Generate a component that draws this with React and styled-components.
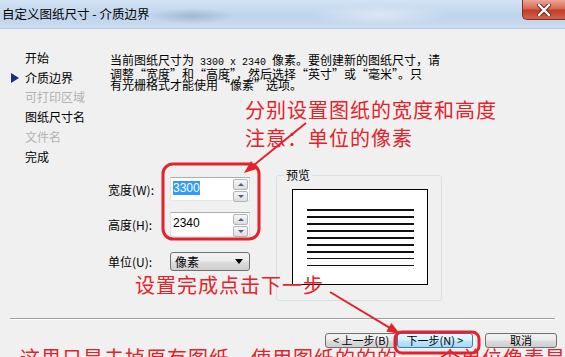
import React from 'react';
import styled, { createGlobalStyle } from 'styled-components';

const GlobalStyle = createGlobalStyle`
  html, body {
    margin:0;
    padding:0;
    background:#f0f0f0;
  }
  body {
    font-family:"Noto Sans CJK SC", "Liberation Sans", sans-serif;
  }
`;

const RED = '#e4222b';

const Window = styled.div`
  position:relative;
  width:565px;
  height:357px;
  overflow:hidden;
  background:#f0f0f0;
  display:flex;
  flex-direction:column;
  font-family:"Noto Sans CJK SC", "Liberation Sans", sans-serif;
  color:#000;
`;

const TitleBar = styled.div`
  height:28px;
  flex:none;
  display:flex;
  align-items:flex-start;
  border-bottom:1px solid #b7c8da;
  background:
    radial-gradient(ellipse 42px 8px at 192px 16px, rgba(110,130,160,.35), transparent),
    radial-gradient(ellipse 70px 10px at 380px 15px, rgba(255,255,255,.45), transparent),
    linear-gradient(#d3e3f4, #bfd4eb 55%, #c9dbef);
`;

const Title = styled.div`
  padding-left:2px;
  font-size:12.5px;
  line-height:28px;
  white-space:nowrap;
`;

const CloseButton = styled.div`
  margin-left:auto;
  width:42px;
  height:19px;
  display:flex;
  align-items:center;
  justify-content:center;
  border:1px solid #7a3426;
  border-top:none;
  border-right:none;
  border-bottom-left-radius:5px;
  background:linear-gradient(#eaa596, #d66450 48%, #c23c27 52%, #d5614b);
`;

const Main = styled.div`
  height:289px;
  flex:none;
  display:grid;
  grid-template-columns:110px 1fr;
`;

const Nav = styled.ul`
  list-style:none;
  margin:0;
  padding:19px 0 0 25px;
`;

const NavItem = styled.li`
  position:relative;
  font-size:12px;
  line-height:19.7px;
  color:${(p) => (p.$disabled ? '#b3b3b3' : '#000')};
  &::before {
    content:${(p) => (p.$active ? "''" : 'none')};
    position:absolute;
    left:-14px;
    top:5px;
    border-left:8px solid #1b2a8c;
    border-top:5px solid transparent;
    border-bottom:5px solid transparent;
  }
`;

const Content = styled.div`
  padding-top:25px;
`;

const Description = styled.p`
  margin:0;
  font-size:12px;
  line-height:11px;
  white-space:nowrap;
`;

const Mono = styled.span`
  font-family:"Liberation Mono", monospace;
  font-size:10px;
`;

const FormArea = styled.div`
  margin-top:85px;
  display:flex;
  align-items:flex-start;
`;

const Fields = styled.div`
  margin-left:-2px;
  padding-top:2px;
  display:flex;
  flex-direction:column;
`;

const Row = styled.div`
  display:flex;
  align-items:center;
  margin-top:${(p) => p.$gap || 0}px;
`;

const Label = styled.span`
  width:62px;
  font-size:12px;
  white-space:nowrap;
`;

const SpinBox = styled.div`
  width:80px;
  height:${(p) => p.$h}px;
  box-sizing:border-box;
  display:flex;
  align-items:flex-start;
  background:#fff;
  border:1px solid;
  border-color:#abadb3 #dbdfe6 #e3e9ef #e2e3ea;
`;

const Value = styled.span`
  flex:1;
  padding:3px 0 0 2px;
  font-family:"Liberation Sans", sans-serif;
  font-size:12px;
  line-height:14px;
`;

const Selected = styled.span`
  background:#3399ff;
  color:#fff;
`;

const Spinner = styled.div`
  margin:1px 1px 0 0;
  width:15px;
  display:flex;
  flex-direction:column;
  gap:1px;
`;

const SpinButton = styled.div`
  height:9px;
  display:flex;
  align-items:center;
  justify-content:center;
  border:1px solid #b4b4b4;
  border-radius:2px;
  background:linear-gradient(#f6f6f6, #dedede);
  &::after {
    content:'';
    border-left:3px solid transparent;
    border-right:3px solid transparent;
    ${(p) => (p.$down ? 'border-top:3px solid #4d6185;' : 'border-bottom:3px solid #4d6185;')}
  }
`;

const Select = styled.div`
  width:80px;
  height:19px;
  box-sizing:border-box;
  display:flex;
  align-items:center;
  justify-content:space-between;
  padding:0 6px 0 4px;
  border:1px solid #707070;
  border-radius:3px;
  background:linear-gradient(#f3f3f3, #ebebeb 48%, #dddddd 52%, #cfcfcf);
  font-size:12px;
  &::after {
    content:'';
    border-left:4px solid transparent;
    border-right:4px solid transparent;
    border-top:5px solid #000;
  }
`;

const PreviewGroup = styled.div`
  position:relative;
  margin-left:26px;
  width:166px;
  height:126px;
  box-sizing:border-box;
  padding:13px 0 0 15px;
  border:1px solid #d5dfe5;
  border-radius:3px;
`;

const Legend = styled.span`
  position:absolute;
  top:-9px;
  left:7px;
  padding:0 2px;
  background:#f0f0f0;
  font-size:12px;
  line-height:16px;
`;

const Page = styled.div`
  width:136px;
  height:96px;
  box-sizing:border-box;
  border:1px solid #000;
  background:#fff;
  display:flex;
  flex-direction:column;
  gap:5.4px;
  padding:19px 0 0 14px;
`;

const PageLine = styled.div`
  width:107px;
  height:1.6px;
  background:#111;
`;

const Footer = styled.div`
  display:flex;
  flex-direction:column;
`;

const Separator = styled.div`
  margin:0 10px;
  border-top:1px solid #a0a0a0;
  border-bottom:1px solid #fff;
`;

const ButtonRow = styled.div`
  margin-top:13px;
  padding-right:8px;
  display:flex;
  justify-content:flex-end;
`;

const Button = styled.div`
  width:${(p) => p.$w}px;
  height:15px;
  box-sizing:border-box;
  margin-left:${(p) => p.$gap || 0}px;
  display:flex;
  align-items:center;
  justify-content:center;
  font-size:11px;
  line-height:13px;
  white-space:nowrap;
  border:1px solid ${(p) => (p.$primary ? '#3c7fb1' : '#707070')};
  border-radius:3px;
  background:${(p) =>
    p.$primary
      ? 'linear-gradient(#eaf6fd, #d9f0fc 48%, #bee6fd 52%, #a7d9f5)'
      : 'linear-gradient(#f2f2f2, #ebebeb 48%, #dddddd 52%, #cfcfcf)'};
`;

const Overlay = styled.svg`
  position:absolute;
  left:0;
  top:0;
  pointer-events:none;
`;

const Note = styled.div`
  position:absolute;
  left:${(p) => p.$x}px;
  top:${(p) => p.$y}px;
  font-size:20px;
  line-height:20px;
  letter-spacing:1px;
  color:${RED};
  white-space:nowrap;
`;

function arrowHead(x1, y1, x2, y2, len = 13, w = 5) {
  const dx = x2 - x1;
  const dy = y2 - y1;
  const l = Math.hypot(dx, dy);
  const ux = dx / l;
  const uy = dy / l;
  const bx = x2 - ux * len;
  const by = y2 - uy * len;
  return `${x2},${y2} ${bx - uy * w},${by + ux * w} ${bx + uy * w},${by - ux * w}`;
}

function Arrow({ from, to }) {
  const [x1, y1] = from;
  const [x2, y2] = to;
  const l = Math.hypot(x2 - x1, y2 - y1);
  const ex = x2 - ((x2 - x1) / l) * 8;
  const ey = y2 - ((y2 - y1) / l) * 8;
  return (
    <g>
      <line x1={x1} y1={y1} x2={ex} y2={ey} stroke={RED} strokeWidth="2" />
      <polygon points={arrowHead(x1, y1, x2, y2)} fill={RED} />
    </g>
  );
}

const navItems = [
  { label: '开始' },
  { label: '介质边界', active: true },
  { label: '可打印区域', disabled: true },
  { label: '图纸尺寸名' },
  { label: '文件名', disabled: true },
  { label: '完成' },
];

export default function App() {
  return (
    <Window>
      <GlobalStyle />
      <TitleBar>
        <Title>自定义图纸尺寸 - 介质边界</Title>
        <CloseButton>
          <svg width="14" height="12" viewBox="0 0 14 12">
            <path d="M2 1 L12 11 M12 1 L2 11" stroke="#5a2a22" strokeWidth="4.2" strokeLinecap="round" />
            <path d="M2 1 L12 11 M12 1 L2 11" stroke="#fff" strokeWidth="2.4" strokeLinecap="round" />
          </svg>
        </CloseButton>
      </TitleBar>

      <Main>
        <Nav>
          {navItems.map((item) => (
            <NavItem key={item.label} $active={item.active} $disabled={item.disabled}>
              {item.label}
            </NavItem>
          ))}
        </Nav>

        <Content>
          <Description>
            当前图纸尺寸为<Mono> 3300 x 2340 </Mono>像素。要创建新的图纸尺寸，请
            <br />
            调整“宽度”和“高度”，然后选择“英寸”或“毫米”。只
            <br />
            有光栅格式才能使用“像素”选项。
          </Description>

          <FormArea>
            <Fields>
              <Row>
                <Label>宽度(W):</Label>
                <SpinBox $h={24}>
                  <Value>
                    <Selected>3300</Selected>
                  </Value>
                  <Spinner>
                    <SpinButton />
                    <SpinButton $down />
                  </Spinner>
                </SpinBox>
              </Row>
              <Row $gap={11}>
                <Label>高度(H):</Label>
                <SpinBox $h={25}>
                  <Value>2340</Value>
                  <Spinner>
                    <SpinButton />
                    <SpinButton $down />
                  </Spinner>
                </SpinBox>
              </Row>
              <Row $gap={15}>
                <Label>单位(U):</Label>
                <Select>像素</Select>
              </Row>
            </Fields>

            <PreviewGroup>
              <Legend>预览</Legend>
              <Page>
                {Array.from({ length: 9 }).map((_, i) => (
                  <PageLine key={i} />
                ))}
              </Page>
            </PreviewGroup>
          </FormArea>
        </Content>
      </Main>

      <Footer>
        <Separator />
        <ButtonRow>
          <Button $w={72}>&lt; 上一步(B)</Button>
          <Button $w={76} $primary>下一步(N) &gt;</Button>
          <Button $w={72} $gap={12}>取消</Button>
        </ButtonRow>
      </Footer>

      <Note $x={245} $y={100}>分别设置图纸的宽度和高度</Note>
      <Note $x={245} $y={128}>注意：单位的像素</Note>
      <Note $x={135} $y={275}>设置完成点击下一步</Note>
      <Note $x={20} $y={348}>这里只是去掉原有图纸，使用图纸的的的，一个单位像素是</Note>

      <Overlay width="565" height="357" viewBox="0 0 565 357">
        <rect x="163" y="164" width="96" height="75" rx="10" fill="none" stroke={RED} strokeWidth="3" />
        <rect x="395" y="332" width="84" height="21" rx="7" fill="none" stroke={RED} strokeWidth="3" />
        <Arrow from={[306, 123]} to={[244, 173]} />
        <Arrow from={[330, 292]} to={[400, 334]} />
      </Overlay>
    </Window>
  );
}
